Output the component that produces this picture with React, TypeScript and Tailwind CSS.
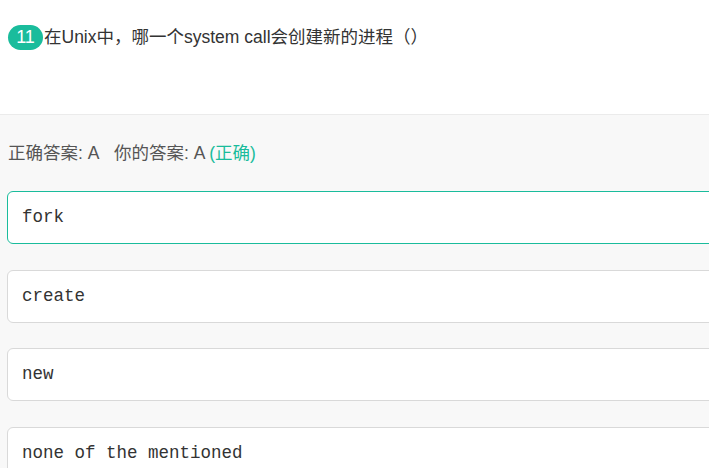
import React from 'react';

const options = ['fork', 'create', 'new', 'none of the mentioned'];

export default function App() {
  return (
    <div className="w-[709px] h-[468px] overflow-hidden bg-white font-['Liberation_Sans','Noto_Sans_CJK_SC',sans-serif] text-[#333]">
      {/* question */}
      <div className="h-[114px] pt-[25px] pl-2">
        <div className="flex items-center text-[17.5px] leading-[25px]">
          <span className="h-[25px] w-[35px] rounded-full bg-[#1abc9c] text-white text-[18px] font-medium flex items-center justify-center mr-[1px]">
            11
          </span>
          <span>在Unix中，哪一个system call会创建新的进程（）</span>
        </div>
      </div>

      {/* answers */}
      <div className="border-t border-[#ebebeb] bg-[#f8f8f8] h-full pl-[7px]">
        <div className="pt-[27px] pl-[1px] text-[17.5px] leading-[22px] text-[#555]">
          正确答案: A&nbsp;&nbsp;&nbsp;你的答案: A <span className="text-[#1abc9c]">(正确)</span>
        </div>
        <div className="mt-[27px] flex flex-col gap-[25.5px] w-[720px]">
          {options.map((opt, i) => (
            <div
              key={opt}
              className={`h-[53px] rounded-[6px] bg-white border flex items-center pl-[14px] font-['Liberation_Mono',monospace] text-[17.5px] text-[#333] ${
                i === 0 ? 'border-[#1abc9c]' : 'border-[#d9d9d9]'
              }`}
            >
              {opt}
            </div>
          ))}
        </div>
      </div>
    </div>
  );
}
